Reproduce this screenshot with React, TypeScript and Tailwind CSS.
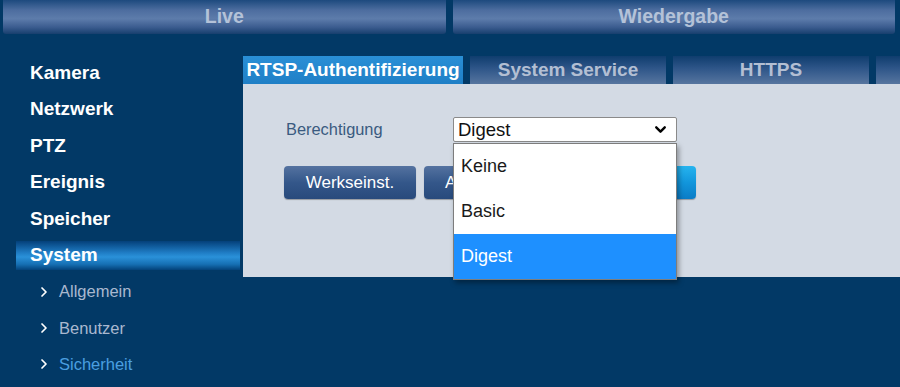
import React from 'react';
import { ChevronDown, ChevronRight } from 'lucide-react';

const topBtn =
  'flex-1 h-[34px] rounded-b-[3px] flex items-center justify-center text-[19.5px] font-bold text-[#b4c2d8] bg-[linear-gradient(180deg,#1d4a7e_0%,#4d6d9f_30%,#5d7cab_55%,#3b5c8f_80%,#173f6e_100%)]';

const tabIdle =
  'h-[28px] flex items-center justify-center text-[19px] font-bold text-[#b3bfd3] bg-[linear-gradient(180deg,#0f3d6e_0%,#2f5689_45%,#56759f_100%)]';

const btn =
  'w-[132px] h-[33px] rounded-[4px] flex items-center justify-center text-[17px] text-white shadow-[0_1px_1px_rgba(0,0,0,0.3)]';

const menu = ['Kamera', 'Netzwerk', 'PTZ', 'Ereignis', 'Speicher'];
const sub = ['Allgemein', 'Benutzer', 'Sicherheit'];

export default function App() {
  return (
    <div
      className="w-[900px] h-[387px] overflow-hidden bg-[#023966] flex flex-col"
      style={{ fontFamily: '"Liberation Sans", Arial, sans-serif' }}
    >
      {/* top nav */}
      <div className="flex gap-[7px] px-[3px] pr-[5px]">
        <div className={topBtn}>Live</div>
        <div className={topBtn}>Wiedergabe</div>
      </div>

      <div className="flex flex-1">
        {/* sidebar */}
        <div className="w-[243px] pt-[21px] flex flex-col">
          {menu.map((m) => (
            <div key={m} className="h-[36.4px] flex items-center pl-[30px] text-[19px] font-bold text-white">
              {m}
            </div>
          ))}
          <div className="h-[36.4px] flex items-center">
            <div className="ml-[16px] w-[224px] h-[29px] flex items-center pl-[14px] text-[19px] font-bold text-white bg-[linear-gradient(180deg,#04407a_0%,#1f7cc4_40%,#2a91d9_55%,#1670b4_80%,#03427a_100%)]">
              System
            </div>
          </div>
          {sub.map((s) => (
            <div key={s} className="h-[36.4px] flex items-center pl-[36px] gap-[7px]">
              <ChevronRight size={16} strokeWidth={2.6} className="text-white" />
              <span className={`text-[16.5px] ${s === 'Sicherheit' ? 'text-[#4a9fe0]' : 'text-[#a9b8cf]'}`}>{s}</span>
            </div>
          ))}
        </div>

        {/* main */}
        <div className="flex-1 pt-[22px] flex flex-col">
          <div className="flex gap-[7px] h-[28px]">
            <div className="w-[220px] h-[28px] flex items-center justify-center text-[19px] font-bold text-white bg-[linear-gradient(180deg,#2a8fd6_0%,#1f7fc6_100%)]">
              RTSP-Authentifizierung
            </div>
            <div className={`${tabIdle} w-[196px]`}>System Service</div>
            <div className={`${tabIdle} w-[196px]`}>HTTPS</div>
            <div className={`${tabIdle} flex-1`}></div>
          </div>

          <div className="h-[193px] bg-[#d3dae4] pt-[33px]">
            <div className="flex items-center h-[25px]">
              <div className="w-[210px] pl-[43px] text-[16.4px] text-[#3a5a80]">Berechtigung</div>
              <div className="relative">
                <div className="w-[224px] h-[25px] bg-white border border-[#8a8a8a] rounded-[2px] flex items-center justify-between pl-[4px] pr-[7px] text-[18.5px] text-[#111]">
                  <span>Digest</span>
                  <ChevronDown size={17} strokeWidth={3.4} className="text-black" />
                </div>
                <div className="absolute left-0 top-[26px] z-10 w-[224px] bg-white border border-[#7d7d7d] shadow-[2px_3px_5px_rgba(0,0,0,0.35)] text-[18px]">
                  <div className="h-[45px] flex items-center pl-[7px] text-[#1a1a1a]">Keine</div>
                  <div className="h-[45px] flex items-center pl-[7px] text-[#1a1a1a]">Basic</div>
                  <div className="h-[45px] flex items-center pl-[7px] text-white bg-[#1e90ff]">Digest</div>
                </div>
              </div>
            </div>

            <div className="flex gap-[8px] pl-[41px] mt-[24px]">
              <div className={`${btn} bg-[linear-gradient(180deg,#5472a0_0%,#34578a_50%,#284a7c_100%)]`}>
                Werkseinst.
              </div>
              <div className={`${btn} justify-start pl-[21px] bg-[linear-gradient(180deg,#5472a0_0%,#34578a_50%,#284a7c_100%)]`}>
                Aktual.
              </div>
              <div className={`${btn} w-[128px] bg-[linear-gradient(180deg,#26b4ef_0%,#1296dc_50%,#0a7cc6_100%)]`}>
                Speichern
              </div>
            </div>
          </div>
        </div>
      </div>
    </div>
  );
}
